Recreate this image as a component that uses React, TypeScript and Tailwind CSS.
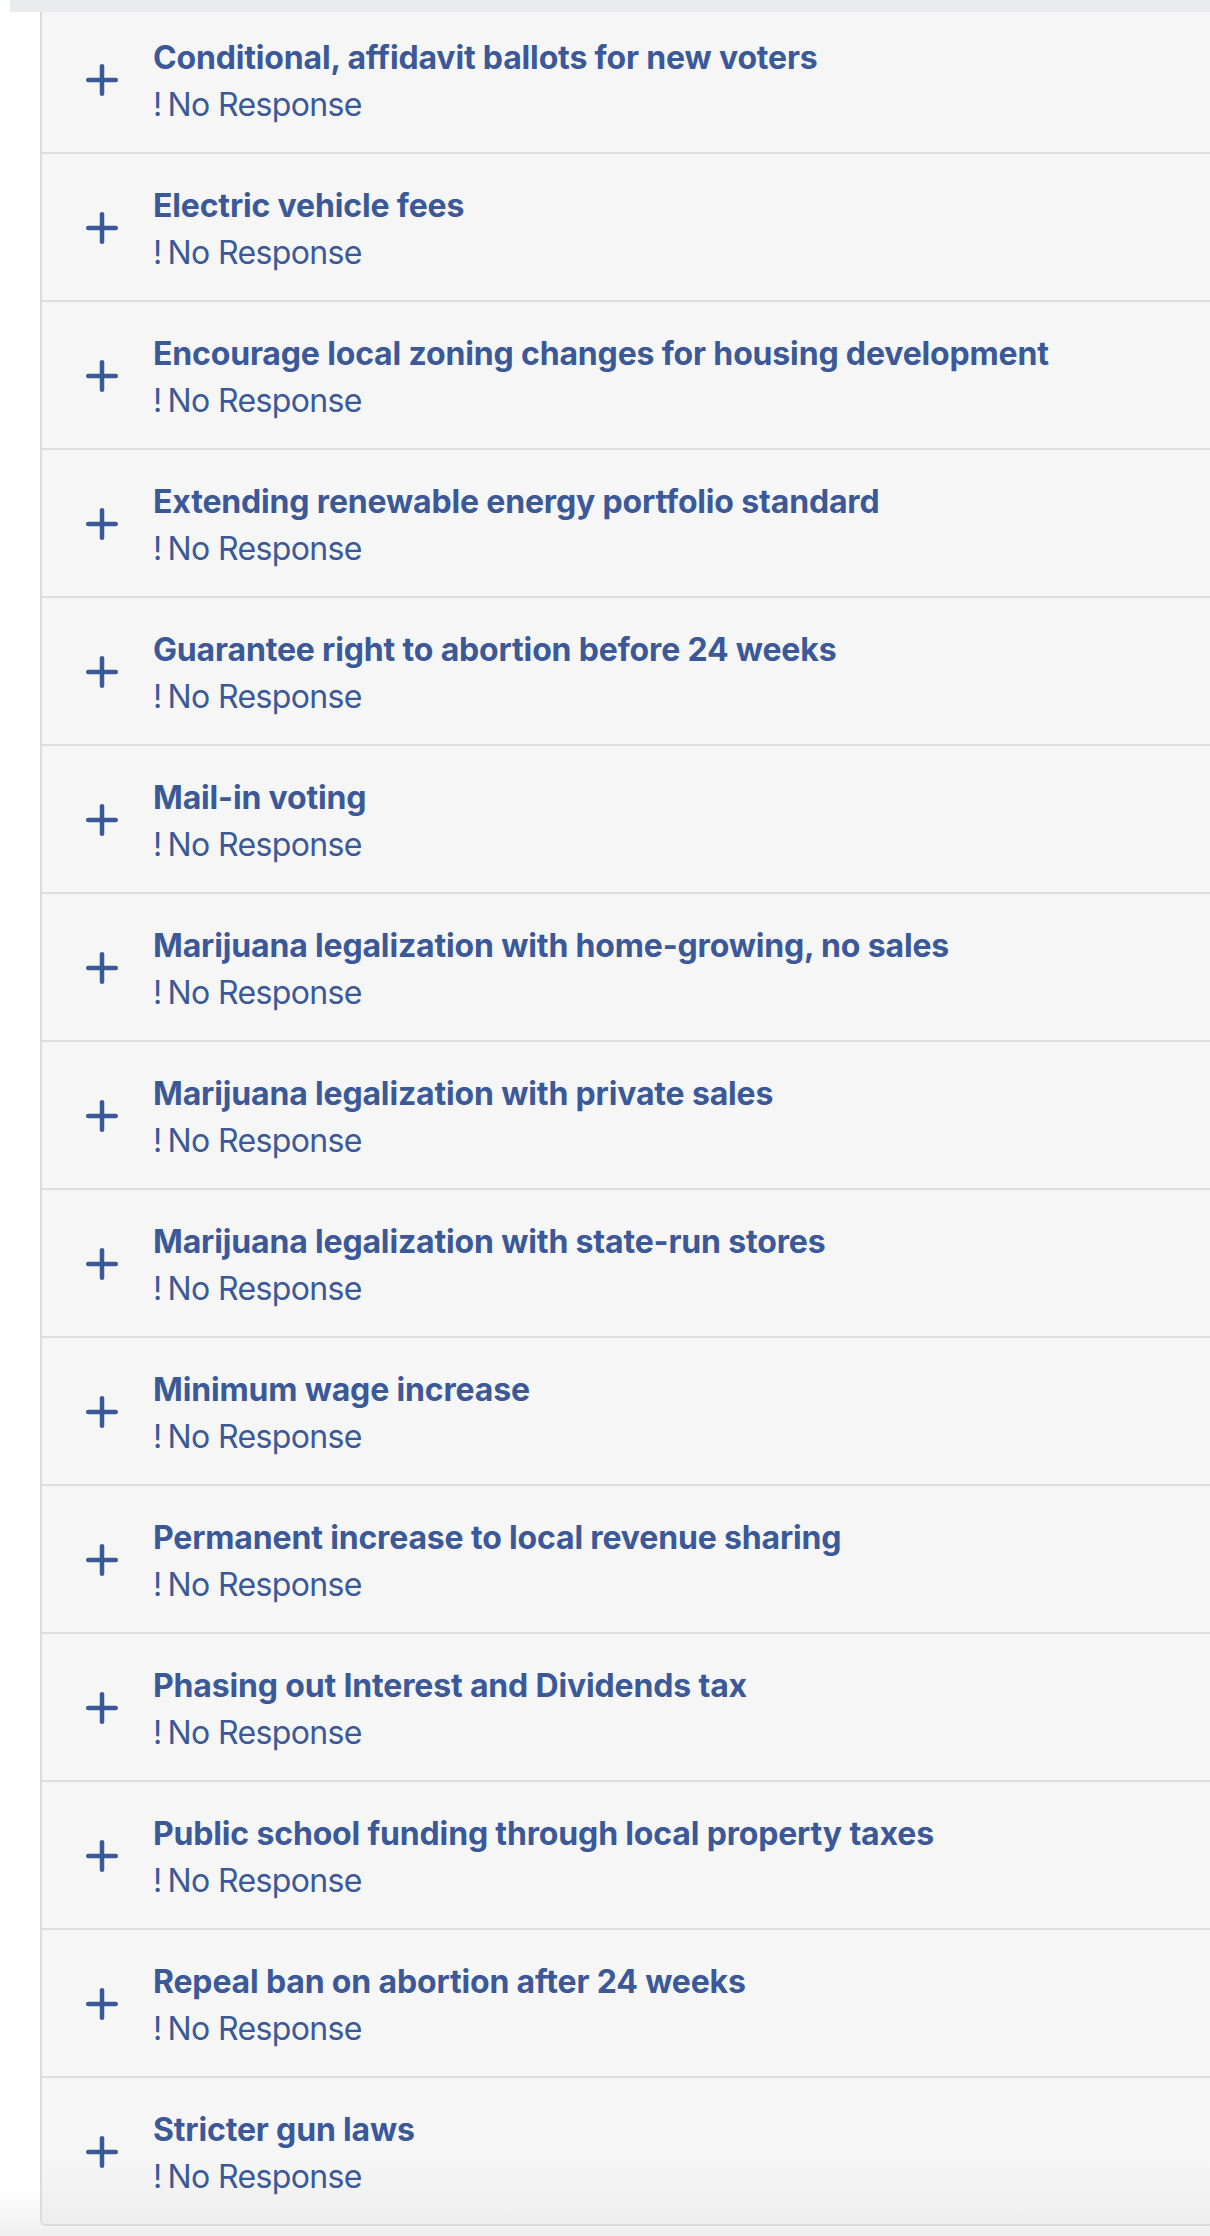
import React from "react";

const items = [
  "Conditional, affidavit ballots for new voters",
  "Electric vehicle fees",
  "Encourage local zoning changes for housing development",
  "Extending renewable energy portfolio standard",
  "Guarantee right to abortion before 24 weeks",
  "Mail-in voting",
  "Marijuana legalization with home-growing, no sales",
  "Marijuana legalization with private sales",
  "Marijuana legalization with state-run stores",
  "Minimum wage increase",
  "Permanent increase to local revenue sharing",
  "Phasing out Interest and Dividends tax",
  "Public school funding through local property taxes",
  "Repeal ban on abortion after 24 weeks",
  "Stricter gun laws",
];

function Plus() {
  return (
    <svg width="32" height="32" viewBox="0 0 32 32" className="mt-[2px] shrink-0">
      <line x1="2.25" y1="16" x2="29.75" y2="16" stroke="#3b5998" strokeWidth="4.5" strokeLinecap="round" />
      <line x1="16" y1="2.25" x2="16" y2="29.75" stroke="#3b5998" strokeWidth="4.5" strokeLinecap="round" />
    </svg>
  );
}

export default function App() {
  return (
    <div className="relative min-h-[2236px] overflow-hidden bg-linear-to-b from-white from-[98%] to-[#efefef] font-['Inter',sans-serif]">
      <div className="absolute left-[10px] right-0 top-0 z-10 h-[12px] bg-[#e9ebee]" />
      <div className="pl-[40px] pt-[4px]">
        <div className="overflow-hidden rounded-bl-[6px] border-2 border-r-0 border-[#dcdcdc] bg-[#f6f6f6]">
          {items.map((t, i) => {
            const last = i === items.length - 1;
            return (
              <div
                key={t}
                className={
                  last
                    ? "flex h-[146px] items-center gap-[35px] pl-[44px] bg-linear-to-b from-[#f6f6f6] from-[55%] to-[#eeeeee]"
                    : "flex h-[148px] items-center gap-[35px] pl-[44px] border-b-2 border-[#dddddd]"
                }
              >
                <Plus />
                <div className="pt-[4px] text-[#3b5998] text-[32px] leading-[47px]">
                  <div className="font-bold tracking-[-0.005em]">{t}</div>
                  <div className="font-normal tracking-[-0.02em]">
                    <span className="mr-[6px]">!</span>No Response
                  </div>
                </div>
              </div>
            );
          })}
        </div>
      </div>
    </div>
  );
}
